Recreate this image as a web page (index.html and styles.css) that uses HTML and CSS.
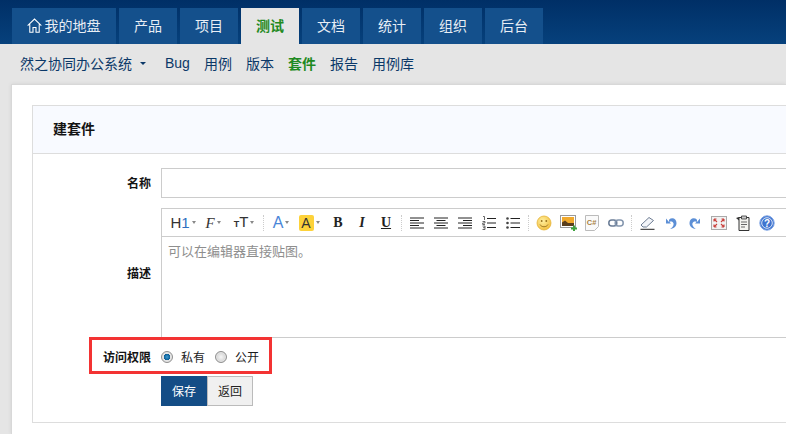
FILE: index.html
```html
<!DOCTYPE html>
<html lang="zh">
<head>
<meta charset="utf-8">
<title>建套件</title>
<link rel="stylesheet" href="styles.css">
</head>
<body>
<header class="topbar">
  <nav class="tabs">
    <a class="tab tab-home"><svg class="home" viewBox="0 0 14 14" width="15" height="15"><path d="M.6 7.200 7 1l6.400 6.200M2.600 5.800V13.300h3V8.800h2.800v4.500h3V5.800" fill="none" stroke="#fff" stroke-width="1"/></svg>我的地盘</a>
    <a class="tab">产品</a>
    <a class="tab">项目</a>
    <a class="tab active">测试</a>
    <a class="tab">文档</a>
    <a class="tab">统计</a>
    <a class="tab">组织</a>
    <a class="tab">后台</a>
  </nav>
</header>
<nav class="subnav">
  <a class="sub sub-brand">然之协同办公系统<i class="caret"></i></a>
  <a class="sub">Bug</a>
  <a class="sub">用例</a>
  <a class="sub">版本</a>
  <a class="sub current">套件</a>
  <a class="sub">报告</a>
  <a class="sub">用例库</a>
</nav>
<main class="page">
  <section class="panel">
    <h1 class="panel-title">建套件</h1>
    <form class="form">
      <label class="label">名称</label>
      <input class="input" type="text">
      <label class="label label-desc">描述</label>
      <div class="editor">
        <div class="toolbar">
          <span class="btn w30"><span class="h1">H<b>1</b></span><i class="dd"></i></span>
          <span class="btn w30"><span class="ff">F</span><i class="dd"></i></span>
          <span class="btn w32"><span class="tt"><small>T</small>T</span><i class="dd"></i></span>
          <i class="sep"></i>
          <span class="btn w28"><span class="ca">A</span><i class="dd"></i></span>
          <span class="btn w28"><span class="hl">A</span><i class="dd"></i></span>
          <span class="btn lm3"><span class="fb">B</span></span>
          <span class="btn"><span class="fi">I</span></span>
          <span class="btn"><span class="fu">U</span></span>
          <i class="sep"></i>
          <span class="btn"><svg viewBox="0 0 14 12" width="14" height="12"><path d="M0 1h14M0 3.500h9M0 6h14M0 8.500h9M0 11h14" stroke="#222"/></svg></span>
          <span class="btn"><svg viewBox="0 0 14 12" width="14" height="12"><path d="M0 1h14M2.500 3.500h9M0 6h14M2.500 8.500h9M0 11h14" stroke="#222"/></svg></span>
          <span class="btn"><svg viewBox="0 0 14 12" width="14" height="12"><path d="M0 1h14M5 3.500h9M0 6h14M5 8.500h9M0 11h14" stroke="#222"/></svg></span>
          <span class="btn"><svg viewBox="0 0 14 14" width="14" height="14"><path d="M5 2.500h9M5 7h9M5 11.500h9" stroke="#222"/><path d="M1 .5h1.500v3.500M.5 5.500h2.500v1.500H.7v1.500H3M.5 10H3v3.500H.5M1 11.700h2" stroke="#444" stroke-width=".8" fill="none"/></svg></span>
          <span class="btn"><svg viewBox="0 0 14 14" width="14" height="14"><path d="M4.500 2.500H14M4.500 7H14M4.500 11.500H14" stroke="#222"/><circle cx="1.500" cy="2.500" r="1.300" fill="#444"/><circle cx="1.500" cy="7" r="1.300" fill="#444"/><circle cx="1.500" cy="11.500" r="1.300" fill="#444"/></svg></span>
          <i class="sep"></i>
          <span class="btn"><svg viewBox="0 0 16 16" width="16" height="16"><defs><radialGradient id="sm" cx=".4" cy=".35" r=".7"><stop offset="0" stop-color="#fff0a0"/><stop offset="1" stop-color="#f2bd3c"/></radialGradient></defs><circle cx="8" cy="8" r="7" fill="url(#sm)" stroke="#e6b53a" stroke-width=".8"/><circle cx="5.700" cy="6" r=".9" fill="#96701c"/><circle cx="10.300" cy="6" r=".9" fill="#96701c"/><path d="M4 9.500c1.500 3 6.500 3 8 0" fill="none" stroke="#96701c" stroke-width=".9"/></svg></span>
          <span class="btn"><svg viewBox="0 0 17 16" width="17" height="16"><rect x=".5" y=".5" width="15" height="12" fill="#fff" stroke="#999"/><rect x="2" y="2" width="12" height="9" fill="#f0a92c"/><path d="M2 11V7.500l3-2 3 2.500h6v3z" fill="#5a3e1c"/><path d="M11 13.500h6M14 10.500v6" stroke="#3fa33f" stroke-width="2"/></svg></span>
          <span class="btn"><svg viewBox="0 0 14 16" width="14" height="16"><path d="M.5.5h13v11l-4 4h-9z" fill="#fafafa" stroke="#bbb"/><text x="1.800" y="10" class="cs">C#</text></svg></span>
          <span class="btn"><svg viewBox="0 0 16 8" width="16" height="8"><rect x=".8" y="1" width="8" height="6" rx="3" fill="none" stroke="#6a7c96" stroke-width="1.500"/><rect x="7.200" y="1" width="8" height="6" rx="3" fill="none" stroke="#8496ae" stroke-width="1.500"/></svg></span>
          <i class="sep"></i>
          <span class="btn"><svg viewBox="0 0 15 14" width="15" height="14"><path d="M1 9 9 1.500l4.500 3L6.500 11H3z" fill="#f3f5f9" stroke="#6d7c92"/><path d="M.5 13.300h14" stroke="#222"/></svg></span>
          <span class="btn"><svg viewBox="0 0 12 14" width="12" height="14"><path d="M4 6 1 2.500v5h5L4.300 5.800C7 4.500 9.500 6.500 8.300 9.500 7.800 11 6.500 12 5 12.800c4 .2 6.500-2.500 6.500-5.800C11.500 2.500 7 1 4 3.700z" fill="#5c8fd6"/></svg></span>
          <span class="btn"><svg viewBox="0 0 12 14" width="12" height="14"><path d="M8 6l3-3.500v5H6l1.700-1.700C5 4.500 2.500 6.500 3.700 9.500 4.200 11 5.500 12 7 12.800c-4 .2-6.500-2.500-6.500-5.800C.5 2.500 5 1 8 3.700z" fill="#5c8fd6"/></svg></span>
          <span class="btn"><svg viewBox="0 0 16 14" width="16" height="14"><rect x=".5" y=".5" width="15" height="13" fill="#f2f2f2" stroke="#aaa"/><path d="M3 3l3 3M3 3h2.500M3 3v2.500M13 3l-3 3M13 3h-2.500M13 3v2.500M3 11l3-3M3 11h2.500M3 11V8.500M13 11l-3-3M13 11h-2.500M13 11V8.500" stroke="#c9403c" stroke-width="1.100" fill="none"/></svg></span>
          <span class="btn"><svg viewBox="0 0 14 16" width="14" height="16"><path d="M3 2.500h10v13H3z" fill="#f4f4f0" stroke="#333"/><path d="M5.500 1h5v3h-5z" fill="#ccc" stroke="#333" stroke-width=".8"/><path d="M0 3l3 2.500V2z" fill="#333"/><path d="M5 7h6M5 9.500h6M5 12h4" stroke="#666"/></svg></span>
          <span class="btn"><svg viewBox="0 0 16 16" width="16" height="16"><circle cx="8" cy="8" r="7.200" fill="#3f74cf" stroke="#7ea4e4"/><circle cx="8" cy="8" r="5.300" fill="none" stroke="#fff" stroke-width=".8"/><text x="8" y="11.500" class="qm">?</text></svg></span>
        </div>
        <div class="editor-body">可以在编辑器直接贴图。</div>
      </div>
      <label class="label label-access">访问权限</label>
      <div class="radios">
        <span class="radio on"></span><span class="radio-text">私有</span>
        <span class="radio"></span><span class="radio-text">公开</span>
      </div>
      <div class="actions">
        <button class="button primary" type="button">保存</button><button class="button" type="button">返回</button>
      </div>
    </form>
  </section>
</main>
<div class="highlight"></div>
</body>
</html>
```
FILE: styles.css
```css
* { box-sizing: border-box; }
html, body { margin: 0; height: 434px; overflow: hidden; }
body {
  position: relative;
  width: 786px;
  background: #e5e5e5;
  font-family: "Liberation Sans", "Noto Sans CJK SC", sans-serif;
  font-size: 12px;
  color: #141414;
}
.topbar {
  height: 44px;
  padding: 8px 0 0 12px;
  background: linear-gradient(#002f66, #06417c);
}
.tabs { display: flex; gap: 3px; height: 36px; }
.tab {
  width: 58px;
  padding-bottom: 2px;
  display: flex;
  align-items: center;
  justify-content: center;
  background: #14508c;
  color: #e8eef5;
  font-size: 14px;
}
.tab-home { width: 104px; }
.home { margin-right: 3px; margin-left: -1px; }
.tab.active { background: #e5e5e5; color: #1f8a22; font-weight: 700; }
.subnav {
  height: 40px;
  padding-left: 20px;
  padding-bottom: 2px;
  display: flex;
  align-items: center;
  gap: 14px;
  font-size: 14px;
  color: #0b3868;
}
.sub-brand { display: flex; align-items: center; margin-right: 5px; }
.caret {
  width: 0;
  height: 0;
  margin-left: 8px;
  border: 3px solid transparent;
  border-top-color: #0b3868;
  border-bottom: 0;
}
.current { color: #1f8a22; font-weight: 700; }
.page {
  height: 350px;
  margin-left: 11px;
  padding: 20px 0 0 20px;
  background: #fff;
  border: 1px solid #d8d8d8;
  border-right: 0;
  border-bottom: 0;
  box-shadow: 0 0 4px rgba(0, 0, 0, .08);
}
.panel { height: 318px; border: 1px solid #ddd; border-right: 0; }
.panel-title {
  margin: 0;
  height: 48px;
  padding: 0 0 3px 20px;
  display: flex;
  align-items: center;
  background: #f8faff;
  border-bottom: 1px solid #ddd;
  font-size: 14px;
  font-weight: 700;
}
.form {
  padding-top: 14px;
  display: grid;
  grid-template-columns: 118px 1fr;
  column-gap: 10px;
}
.label {
  padding-bottom: 2px;
  display: flex;
  align-items: center;
  justify-content: flex-end;
  font-weight: 700;
}
.input { height: 30px; border: 1px solid #ccc; border-right: 0; background: #fff; }
.label-desc { margin-top: 10px; }
.editor {
  min-width: 0;
  height: 130px;
  margin-top: 10px;
  border: 1px solid #ccc;
  border-right: 0;
  overflow: hidden;
}
.toolbar {
  height: 28px;
  padding-left: 6px;
  display: flex;
  align-items: center;
  border-bottom: 1px solid #ccc;
}
.btn {
  flex: none;
  width: 24px;
  display: flex;
  align-items: center;
  justify-content: center;
}
.w30 { width: 30px; }
.w32 { width: 32px; }
.w28 { width: 28px; }
.lm3 { margin-left: 3px; }
.sep {
  flex: none;
  width: 1px;
  height: 16px;
  margin: 0 3px;
  border-left: 1px dotted #ccc;
}
.dd {
  width: 0;
  height: 0;
  margin-left: 2px;
  border: 2.5px solid transparent;
  border-top: 3px solid #888;
  border-bottom: 0;
}
.h1, .ca, .tt { font: 15px/16px "Liberation Sans", sans-serif; color: #333; }
.h1 b { font-weight: 400; color: #2f6fc0; }
.ff { font: italic 15px/16px "Liberation Serif", serif; color: #333; }
.tt { font-size: 15px; }
.tt small { font-size: 9px; font-weight: 700; }
.ca { color: #4a86d8; font-size: 16px; }
.hl {
  width: 15px;
  height: 16px;
  border-radius: 2px;
  background: #fdd23a;
  text-align: center;
  font: 14px/16px "Liberation Sans", sans-serif;
  color: #333;
}
.fb, .fi, .fu { font: 700 14px/16px "Liberation Serif", serif; color: #222; }
.fi { font-style: italic; }
.fu { text-decoration: underline; }
.cs { font: 700 7.500px "Liberation Sans", sans-serif; fill: #a8803f; }
.qm { font: 700 10px "Liberation Sans", sans-serif; fill: #fff; text-anchor: middle; }
.editor-body { padding: 6px 0 0 6px; font-size: 13px; line-height: 18px; color: #8e8e8e; }
.label-access { margin-top: 7px; }
.radios {
  height: 24px;
  margin-top: 7px;
  padding-bottom: 1px;
  display: flex;
  align-items: center;
}
.radio {
  width: 12px;
  height: 12px;
  border-radius: 50%;
  border: 1px solid #8f8f8f;
  background: radial-gradient(#f6f6f6, #c4c4c4);
  box-shadow: inset 0 0 0 1px #e4e4e4;
}
.radio.on { background: radial-gradient(#3d9bd0 0, #0b5d96 3px, #e4e4e4 3.500px); }
.radio-text { margin: 0 10px 0 8px; color: #1c1c1c; }
.actions { grid-column: 2; margin-top: 7px; display: flex; }
.button {
  width: 46px;
  height: 30px;
  padding: 0 0 2px;
  border: 1px solid #bbb;
  background: #f0f0f0;
  color: #222;
  font: 12px "Noto Sans CJK SC", sans-serif;
}
.primary { border-color: #144d86; background: #144d86; color: #fff; }
.highlight {
  position: absolute;
  left: 89px;
  top: 337px;
  width: 183px;
  height: 37px;
  border: 3px solid #f33333;
}
```
